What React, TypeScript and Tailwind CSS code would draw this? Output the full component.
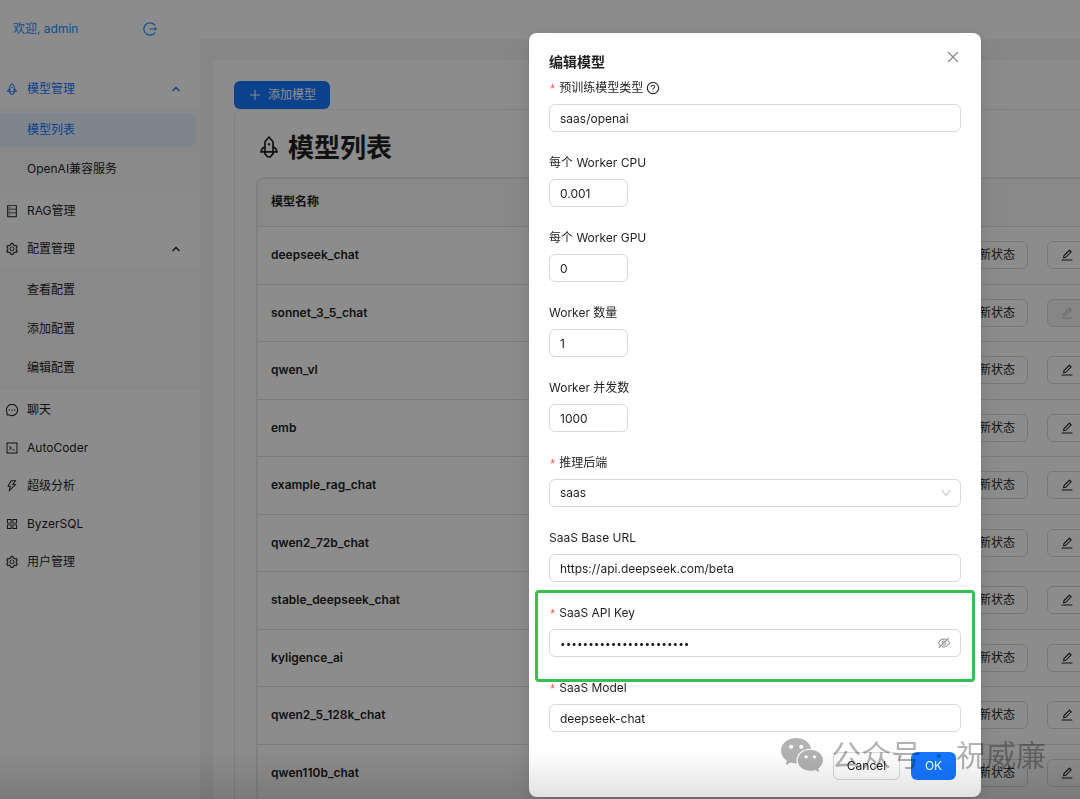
import React, { useState } from 'react';
import {
  AiFillWechat,
  AiOutlineAppstore,
  AiOutlineClose,
  AiOutlineCode,
  AiOutlineDatabase,
  AiOutlineDown,
  AiOutlineEdit,
  AiOutlineEyeInvisible,
  AiOutlineLogout,
  AiOutlineMessage,
  AiOutlinePlus,
  AiOutlineQuestionCircle,
  AiOutlineRocket,
  AiOutlineSetting,
  AiOutlineSync,
  AiOutlineThunderbolt,
} from 'react-icons/ai';

const menu = [
  {
    label: '模型管理',
    icon: AiOutlineRocket,
    active: true,
    children: [{ label: '模型列表', selected: true }, { label: 'OpenAI兼容服务' }],
  },
  { label: 'RAG管理', icon: AiOutlineDatabase },
  {
    label: '配置管理',
    icon: AiOutlineSetting,
    children: [{ label: '查看配置' }, { label: '添加配置' }, { label: '编辑配置' }],
  },
  { label: '聊天', icon: AiOutlineMessage },
  { label: 'AutoCoder', icon: AiOutlineCode },
  { label: '超级分析', icon: AiOutlineThunderbolt },
  { label: 'ByzerSQL', icon: AiOutlineAppstore },
  { label: '用户管理', icon: AiOutlineSetting },
] as {
  label: string;
  icon: React.ComponentType<{ className?: string }>;
  active?: boolean;
  children?: { label: string; selected?: boolean }[];
}[];

const models = [
  { name: 'deepseek_chat' },
  { name: 'sonnet_3_5_chat', locked: true },
  { name: 'qwen_vl' },
  { name: 'emb' },
  { name: 'example_rag_chat' },
  { name: 'qwen2_72b_chat' },
  { name: 'stable_deepseek_chat' },
  { name: 'kyligence_ai' },
  { name: 'qwen2_5_128k_chat' },
  { name: 'qwen110b_chat' },
];

const Sidebar: React.FC = () => (
  <aside className="w-[200px] shrink-0 bg-white">
    <div className="flex h-[58px] items-center justify-between pl-[13px] pr-[42px] text-[#1890ff]">
      <span>欢迎, admin</span>
      <button aria-label="Logout">
        <AiOutlineLogout className="h-4 w-4" />
      </button>
    </div>
    <nav className="pt-3">
      {menu.map((item) => (
        <div key={item.label}>
          <a
            href="#"
            className={`flex h-[38px] items-center pl-[5px] pr-[19px] ${item.active ? 'text-[#1677ff]' : ''}`}
          >
            <item.icon className="mr-2 h-[14px] w-[14px]" />
            <span className="flex-1">{item.label}</span>
            {item.children && (
              <svg viewBox="0 0 10 10" className="h-[10px] w-[10px]" fill="none" stroke="currentColor" strokeWidth="1.4">
                <path d="M1.5 7 5 3.5 8.5 7" />
              </svg>
            )}
          </a>
          {item.children && (
            <div className="mb-px flex flex-col gap-[5px] bg-[#fafafa] py-[5px]">
              {item.children.map((child) => (
                <a
                  key={child.label}
                  href="#"
                  className={`mr-1 flex h-[34px] items-center rounded-r-md pl-[27px] ${
                    child.selected ? 'bg-[#e6f4ff] text-[#1677ff]' : ''
                  }`}
                >
                  {child.label}
                </a>
              ))}
            </div>
          )}
        </div>
      ))}
    </nav>
  </aside>
);

const ModelTable: React.FC = () => (
  <div className="min-w-[1230px] overflow-hidden rounded-lg border-2 border-[#eaeaea]">
    <table className="w-full table-fixed text-left">
      <thead>
        <tr className="h-[47px] border-b border-[#e0e0e0] bg-[#fafafa]">
          <th className="w-[663px] pl-[13px] font-semibold">模型名称</th>
          <th />
        </tr>
      </thead>
      <tbody>
        {models.map((model) => (
          <tr key={model.name} className="border-b border-[#e0e0e0] odd:h-[58px] even:h-[57px]">
            <td className="pl-[13px] font-semibold">{model.name}</td>
            <td>
              <div className="flex gap-[19px] pl-[13px]">
                <button className="flex h-7 w-[94px] items-center justify-end gap-2 rounded-md border border-[#d9d9d9] pr-3">
                  <AiOutlineSync className="h-3 w-3" />
                  刷新状态
                </button>
                <button
                  aria-label="Edit"
                  disabled={model.locked}
                  className="flex h-7 w-[80px] items-center rounded-md border border-[#d9d9d9] pl-3 disabled:bg-[#f5f5f5] disabled:text-[#bfbfbf]"
                >
                  <AiOutlineEdit className="h-[14px] w-[14px]" />
                </button>
              </div>
            </td>
          </tr>
        ))}
      </tbody>
    </table>
  </div>
);

const fieldClass = 'h-7 rounded-md border border-[#d9d9d9] bg-white px-[10px] outline-none';

interface FieldProps {
  id: string;
  label: string;
  required?: boolean;
  help?: boolean;
  highlighted?: boolean;
  children: React.ReactNode;
}

const Field: React.FC<FieldProps> = ({ id, label, required, help, highlighted, children }) => (
  <div className="relative mb-5">
    <label htmlFor={id} className="mb-[5px] flex h-[22px] items-center">
      {required && <span className="mr-[3px] pt-1 font-['Liberation_Mono',monospace] text-[#ff4d4f]">*</span>}
      {label}
      {help && <AiOutlineQuestionCircle className="ml-[3px] h-[14px] w-[14px]" />}
    </label>
    {children}
    {highlighted && (
      <div className="pointer-events-none absolute -inset-x-[14px] -bottom-[25px] -top-3 z-10 rounded border-[3px] border-[#39bf4f]" />
    )}
  </div>
);

const EditModal: React.FC = () => {
  const [showKey, setShowKey] = useState(false);

  return (
    <div className="fixed inset-0 flex items-start justify-end bg-black/45 pr-[99px] pt-[33px]">
      <div
        role="dialog"
        aria-label="编辑模型"
        className="relative w-[452px] rounded-lg bg-white px-5 pb-[17px] pt-[14px] shadow-[0_6px_16px_0_rgba(0,0,0,0.08),0_3px_6px_-4px_rgba(0,0,0,0.12),0_9px_28px_8px_rgba(0,0,0,0.05)]"
      >
        <div className="mb-[2px] flex h-7 items-center justify-between">
          <h2 className="text-[14px] font-semibold">编辑模型</h2>
          <button aria-label="Close" className="mb-2 text-[#8c8c8c]">
            <AiOutlineClose className="h-4 w-4" />
          </button>
        </div>

        <form onSubmit={(e) => e.preventDefault()}>
          <Field id="type" label="预训练模型类型" required help>
            <input id="type" defaultValue="saas/openai" className={`${fieldClass} w-full`} />
          </Field>
          <Field id="cpu" label="每个 Worker CPU">
            <input id="cpu" defaultValue="0.001" className={`${fieldClass} w-[79px]`} />
          </Field>
          <Field id="gpu" label="每个 Worker GPU">
            <input id="gpu" defaultValue="0" className={`${fieldClass} w-[79px]`} />
          </Field>
          <Field id="workers" label="Worker 数量">
            <input id="workers" defaultValue="1" className={`${fieldClass} w-[79px]`} />
          </Field>
          <Field id="concurrency" label="Worker 并发数">
            <input id="concurrency" defaultValue="1000" className={`${fieldClass} w-[79px]`} />
          </Field>
          <Field id="backend" label="推理后端" required>
            <div className="relative flex">
              <select id="backend" className={`${fieldClass} w-full appearance-none`}>
                <option>saas</option>
              </select>
              <AiOutlineDown className="pointer-events-none absolute right-[9px] top-2 h-3 w-3 text-[#bfbfbf]" />
            </div>
          </Field>
          <Field id="base-url" label="SaaS Base URL">
            <input id="base-url" defaultValue="https://api.deepseek.com/beta" className={`${fieldClass} w-full`} />
          </Field>
          <Field id="api-key" label="SaaS API Key" required highlighted>
            <div className="relative flex">
              <input
                id="api-key"
                type={showKey ? 'text' : 'password'}
                defaultValue="sk-0123456789abcdefghij"
                className={`${fieldClass} w-full text-[10px]`}
              />
              <button
                type="button"
                aria-label="Toggle key"
                onClick={() => setShowKey(!showKey)}
                className="absolute right-[10px] top-[7px] text-[#8c8c8c]"
              >
                <AiOutlineEyeInvisible className="h-[14px] w-[14px]" />
              </button>
            </div>
          </Field>
          <Field id="model" label="SaaS Model" required>
            <input id="model" defaultValue="deepseek-chat" className={`${fieldClass} w-full`} />
          </Field>

          <div className="flex justify-end gap-[11px] pr-[5px]">
            <button type="button" className="h-7 w-[67px] rounded-md border border-[#d9d9d9] bg-white">
              Cancel
            </button>
            <button type="submit" className="h-7 w-[45px] rounded-md bg-[#1677ff] text-white">
              OK
            </button>
          </div>
        </form>
      </div>
    </div>
  );
};

const App: React.FC = () => (
  <div className="flex h-screen overflow-hidden bg-[#f5f5f5] font-[Inter,'Noto_Sans_CJK_SC',sans-serif] text-[12px] text-[#1f1f1f]">
    <Sidebar />
    <div className="min-w-0 flex-1">
      <header className="h-[39px] bg-white" />
      <main className="min-w-[1300px] pl-[13px] pt-[21px]">
        <div className="bg-white p-[21px]">
          <button className="flex h-7 w-24 items-center justify-center gap-[6px] rounded-md bg-[#1677ff] text-white">
            <AiOutlinePlus className="h-[14px] w-[14px]" />
            添加模型
          </button>
          <section className="rounded-lg border border-[#ebebeb] px-[21px] pb-6 pt-[18px]">
            <h1 className="mb-[11px] flex h-[38px] items-center gap-[6px] text-[26px] font-semibold">
              <AiOutlineRocket className="h-[26px] w-[26px]" />
              模型列表
            </h1>
            <ModelTable />
          </section>
        </div>
      </main>
    </div>

    <EditModal />

    {/* bottom fade and channel signature */}
    <div className="pointer-events-none fixed inset-x-0 bottom-0 h-12 bg-linear-to-b from-transparent to-black/12" />
    <div className="pointer-events-none fixed bottom-5 right-[34px] flex items-center gap-[5px] text-black/30">
      <AiFillWechat className="h-12 w-12" />
      <div className="flex gap-[13px] text-[30px] leading-[44px]">
        <span>公众号</span>
        <span>·</span>
        <span>祝威廉</span>
      </div>
    </div>
  </div>
);

export default App;
